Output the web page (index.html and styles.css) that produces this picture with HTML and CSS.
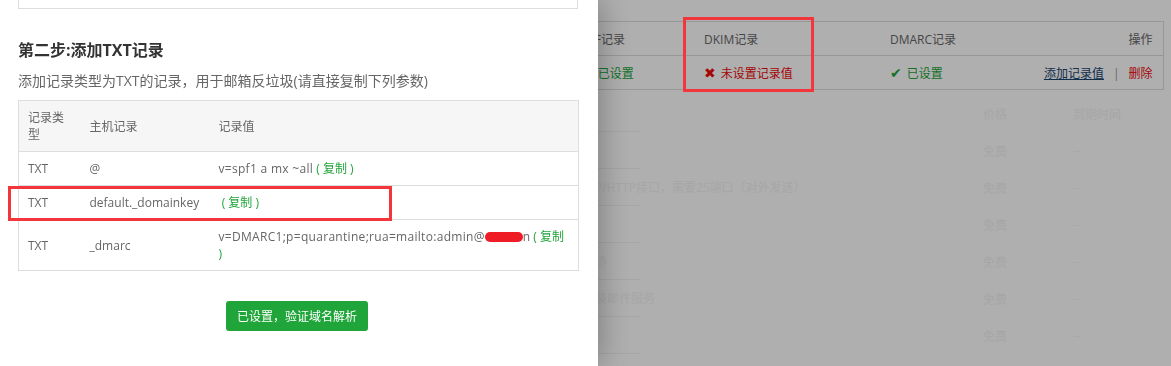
FILE: index.html
```html
<!DOCTYPE html>
<html lang="zh-CN">
<head>
<meta charset="utf-8">
<title>添加TXT记录</title>
<link rel="stylesheet" href="styles.css">
</head>
<body>
<div class="page">
  <table class="domain-table">
    <colgroup>
      <col class="c1"><col class="c2"><col class="c3"><col class="c4"><col class="c5">
    </colgroup>
    <thead>
      <tr><th></th><th>SPF记录</th><th>DKIM记录</th><th>DMARC记录</th><th class="right">操作</th></tr>
    </thead>
    <tbody>
      <tr>
        <td></td>
        <td><span class="ok"><i class="ico">✔</i>已设置</span></td>
        <td><span class="bad"><i class="ico">✖</i>未设置记录值</span></td>
        <td><span class="ok"><i class="ico">✔</i>已设置</span></td>
        <td class="right"><a class="act-link">添加记录值</a><span class="sep">|</span><a class="act-del">删除</a></td>
      </tr>
    </tbody>
  </table>

  <div class="faint-list">
    <div class="frow">
      <div class="fl"></div><div class="fgap"></div><div class="fc">价格</div><div class="fc">到期时间</div>
    </div>
    <div class="frow">
      <div class="fl"></div><div class="fgap"></div><div class="fc">免费</div><div class="fc">--</div>
    </div>
    <div class="frow">
      <div class="fl"><span class="ft t1">SMTP/HTTP接口，需要25端口（对外发送）</span></div><div class="fgap"></div><div class="fc">免费</div><div class="fc">--</div>
    </div>
    <div class="frow">
      <div class="fl"></div><div class="fgap"></div><div class="fc">免费</div><div class="fc">--</div>
    </div>
    <div class="frow">
      <div class="fl"><span class="ft t2">邮件协</span></div><div class="fgap"></div><div class="fc">免费</div><div class="fc">--</div>
    </div>
    <div class="frow">
      <div class="fl"><span class="ft t3">安装邮件服务</span></div><div class="fgap"></div><div class="fc">免费</div><div class="fc">--</div>
    </div>
    <div class="frow">
      <div class="fl"></div><div class="fgap"></div><div class="fc">免费</div><div class="fc">--</div>
    </div>
  </div>
</div>

<div class="mask"></div>

<aside class="drawer">
  <div class="prev-box"></div>
  <h3 class="step-title">第二步:添加TXT记录</h3>
  <p class="step-desc">添加记录类型为TXT的记录，用于邮箱反垃圾(请直接复制下列参数)</p>
  <table class="rec-table">
    <colgroup><col class="r1"><col class="r2"><col class="r3"></colgroup>
    <thead>
      <tr><th>记录类型</th><th>主机记录</th><th>记录值</th></tr>
    </thead>
    <tbody>
      <tr><td>TXT</td><td>@</td><td><span class="val">v=spf1 a mx ~all</span> <a class="copy">( 复制 )</a></td></tr>
      <tr><td>TXT</td><td>default._domainkey</td><td>&nbsp;<a class="copy">( 复制 )</a></td></tr>
      <tr><td>TXT</td><td>_dmarc</td><td><span class="nowrap"><span class="val">v=DMARC1;p=quarantine;rua=mailto:admin@</span><span class="redact"></span>n <a class="copy">( 复制</a></span><br><a class="copy">)</a></td></tr>
    </tbody>
  </table>
  <div class="btn-row">
    <button class="btn-verify">已设置，验证域名解析</button>
  </div>
</aside>

<div class="mark mark-dkim"></div>
<div class="mark mark-row"></div>
</body>
</html>
```

FILE: styles.css
```css
* { box-sizing: border-box; }
html, body {
  margin: 0;
  padding: 0;
  width: 1171px;
  height: 366px;
  overflow: hidden;
  background: #fff;
  font-family: "Open Sans", "Noto Sans CJK SC", sans-serif;
  font-size: 12px;
  color: #666;
}

/* ---------- underlying page ---------- */
.page {
  padding-top: 21px;
}
.domain-table {
  margin-left: 400px;
  width: 763px;
  table-layout: fixed;
  border-collapse: collapse;
  border-top: 1px solid #ddd;
  border-right: 1px solid #ddd;
}
.domain-table .c1 { width: 171px; }
.domain-table .c2 { width: 123px; }
.domain-table .c3 { width: 186px; }
.domain-table .c4 { width: 150px; }
.domain-table .c5 { width: 133px; }
.domain-table th,
.domain-table td {
  height: 34px;
  padding: 0 10px;
  text-align: left;
  font-weight: normal;
  border-bottom: 1px solid #ddd;
  color: #666;
  white-space: nowrap;
}
.domain-table .right { text-align: right; }
.ico {
  font-style: normal;
  font-family: "DejaVu Sans", sans-serif;
  font-size: 14px;
  margin-right: 5px;
}
.ok { color: #20a53a; }
.bad { color: #ef0808; }
.act-link {
  color: #1a4470;
  text-decoration: underline;
}
.sep {
  color: #999;
  margin: 0 9px;
}
.act-del { color: #ef0808; }

.faint-list {
  margin-top: 5px;
  color: #f3f3f3;
}
.frow {
  display: grid;
  grid-template-columns: 640px 343px 90px 1fr;
  height: 37px;
  align-items: center;
}
.fl {
  height: 37px;
  border-bottom: 1px solid #f2f2f2;
  display: flex;
  align-items: center;
  white-space: nowrap;
}
.ft { display: inline-block; }
.t1 { margin-left: 571px; }
.t2 { margin-left: 571px; }
.t3 { margin-left: 583px; }

/* ---------- mask ---------- */
.mask {
  position: fixed;
  inset: 0;
  background: rgba(0, 0, 0, 0.314);
}

/* ---------- drawer ---------- */
.drawer {
  position: fixed;
  left: 0;
  top: 0;
  bottom: 0;
  width: 598px;
  background: #fff;
  padding: 0 20px 0 18px;
  box-shadow: 2px 0 30px rgba(0, 0, 0, 0.3);
}
.prev-box {
  height: 9px;
  border: 1px solid #ddd;
  border-top: none;
}
.step-title {
  margin: 30px 0 0;
  font-size: 16px;
  line-height: 22px;
  font-weight: bold;
  color: #333;
}
.step-desc {
  margin: 10px 0 0;
  font-size: 14px;
  line-height: 20px;
  color: #666;
}
.rec-table {
  margin-top: 9px;
  width: 560px;
  table-layout: fixed;
  border-collapse: collapse;
  border: 1px solid #ddd;
}
.rec-table .r1 { width: 62px; }
.rec-table .r2 { width: 129px; }
.rec-table .r3 { width: 369px; }
.rec-table th,
.rec-table td {
  padding: 8px 8px 8px 9px;
  line-height: 17px;
  text-align: left;
  font-weight: normal;
  color: #666;
  border-top: 1px solid #ddd;
}
.rec-table thead th {
  background: #f6f6f6;
}
.val { letter-spacing: 0.3px; }
.copy { color: #20a53a; }
.nowrap { white-space: nowrap; }
.redact {
  display: inline-block;
  width: 38px;
  height: 10px;
  background: #ee1c25;
  border-radius: 5px;
  vertical-align: -1px;
}
.btn-row {
  display: flex;
  justify-content: center;
  margin-top: 30px;
  padding-right: 2px;
}
.btn-verify {
  height: 30px;
  padding: 0 11px;
  border: none;
  border-radius: 3px;
  background: #20a53a;
  color: #fff;
  font-family: inherit;
  font-size: 12px;
}

/* ---------- annotation marks ---------- */
.mark {
  position: absolute;
  border: 3px solid #f3363b;
}
.mark-dkim {
  left: 683px;
  top: 17px;
  width: 131px;
  height: 75px;
}
.mark-row {
  left: 8px;
  top: 186px;
  width: 384px;
  height: 35px;
}
```
